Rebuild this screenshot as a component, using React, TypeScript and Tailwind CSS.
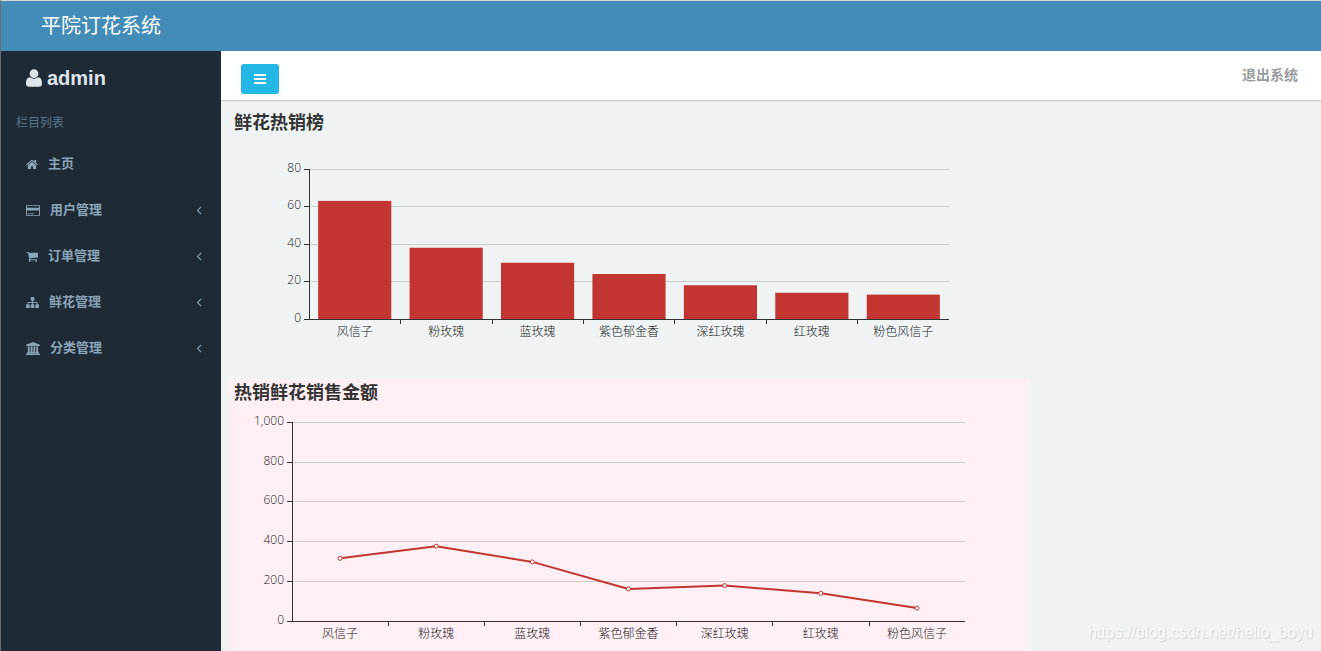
import React from 'react';

const FLOWERS = ['风信子', '粉玫瑰', '蓝玫瑰', '紫色郁金香', '深红玫瑰', '红玫瑰', '粉色风信子'];
const SALES = [63, 38, 30, 24, 18, 14, 13];
const AMOUNTS = [315, 376, 297, 161, 178, 139, 65];

const ICONS = {
  user: 'M1408 1277q0 120-73 189.500t-194 69.500h-874q-121 0-194-69.500t-73-189.500q0-53 3.500-103.500t14-109 26.500-108.500 43-97.500 62-81 85.500-53.500 111.500-20q9 0 42 21.500t74.500 48 108 48 133.500 21.500 133.500-21.500 108-48 74.500-48 42-21.500q61 0 111.500 20t85.500 53.500 62 81 43 97.500 26.500 108.500 14 109 3.500 103.500zm-320-893q0 159-112.500 271.500t-271.500 112.500-271.500-112.500-112.500-271.500 112.500-271.500 271.500-112.500 271.500 112.500 112.500 271.500z',
  bars: 'M1664 1344v128q0 26-19 45t-45 19h-1408q-26 0-45-19t-19-45v-128q0-26 19-45t45-19h1408q26 0 45 19t19 45zm0-512v128q0 26-19 45t-45 19h-1408q-26 0-45-19t-19-45v-128q0-26 19-45t45-19h1408q26 0 45 19t19 45zm0-512v128q0 26-19 45t-45 19h-1408q-26 0-45-19t-19-45v-128q0-26 19-45t45-19h1408q26 0 45 19t19 45z',
  home: 'M1472 992v480q0 26-19 45t-45 19h-384v-384h-256v384h-384q-26 0-45-19t-19-45v-480q0-1 .5-3t.5-3l575-474 575 474q1 2 1 6zm223-69l-62 74q-8 9-21 11h-3q-13 0-21-7l-692-577-692 577q-12 8-24 7-13-2-21-11l-62-74q-8-10-7-23.5t11-21.5l719-599q32-26 76-26t76 26l244 204v-195q0-14 9-23t23-9h192q14 0 23 9t9 23v408l219 182q10 8 11 21.5t-7 23.5z',
  card: 'M1760 128q66 0 113 47t47 113v1216q0 66-47 113t-113 47h-1600q-66 0-113-47t-47-113v-1216q0-66 47-113t113-47h1600zm-1600 128q-13 0-22.5 9.500t-9.500 22.500v224h1664v-224q0-13-9.500-22.500t-22.500-9.500h-1600zm1600 1280q13 0 22.500-9.500t9.500-22.500v-608h-1664v608q0 13 9.500 22.500t22.500 9.500h1600zm-1504-128v-128h256v128h-256zm384 0v-128h384v128h-384z',
  cart: 'M704 1536q0 52-38 90t-90 38-90-38-38-90 38-90 90-38 90 38 38 90zm896 0q0 52-38 90t-90 38-90-38-38-90 38-90 90-38 90 38 38 90zm128-1088v512q0 24-16.5 42.5t-40.5 21.5l-1044 122q13 60 13 70 0 16-24 64h920q26 0 45 19t19 45-19 45-45 19h-1024q-26 0-45-19t-19-45q0-11 8-31.5t16-36 21.5-40 15.5-29.5l-177-823h-204q-26 0-45-19t-19-45 19-45 45-19h256q16 0 28.5 6.5t19.5 15.5 13 24.5 8 26 5.5 29.5 4.500 26h1201q26 0 45 19t19 45z',
  sitemap: 'M1792 1248v320q0 40-28 68t-68 28h-320q-40 0-68-28t-28-68v-320q0-40 28-68t68-28h96v-192h-512v192h96q40 0 68 28t28 68v320q0 40-28 68t-68 28h-320q-40 0-68-28t-28-68v-320q0-40 28-68t68-28h96v-192h-512v192h96q40 0 68 28t28 68v320q0 40-28 68t-68 28h-320q-40 0-68-28t-28-68v-320q0-40 28-68t68-28h96v-192q0-52 38-90t90-38h512v-192h-96q-40 0-68-28t-28-68v-320q0-40 28-68t68-28h320q40 0 68 28t28 68v320q0 40-28 68t-68 28h-96v192h512q52 0 90 38t38 90v192h96q40 0 68 28t28 68z',
  bank: 'M960 0l960 384v128h-128q0 26-20.500 45t-48.500 19h-1526q-28 0-48.500-19t-20.500-45h-128v-128zm-704 640h256v768h128v-768h256v768h128v-768h256v768h128v-768h256v768h59q28 0 48.500 19t20.500 45v64h-1664v-64q0-26 20.500-45t48.500-19h59v-768zm1595 960q28 0 48.500 19t20.500 45v128h-1920v-128q0-26 20.500-45t48.500-19h1782z',
  angleLeft: 'M1203 544q0 13-10 23l-393 393 393 393q10 10 10 23t-10 23l-50 50q-10 10-23 10t-23-10l-466-466q-10-10-10-23t10-23l466-466q10-10 23-10t23 10l50 50q10 10 10 23z',
};

const MENU = [
  { label: '主页', path: ICONS.home, viewBox: '64 0 1664 1792', size: 'w-3', sub: false },
  { label: '用户管理', path: ICONS.card, viewBox: '0 0 1920 1792', size: 'w-3.5', sub: true },
  { label: '订单管理', path: ICONS.cart, viewBox: '64 0 1664 1792', size: 'w-3', sub: true },
  { label: '鲜花管理', path: ICONS.sitemap, viewBox: '0 0 1792 1792', size: 'w-[13px]', sub: true },
  { label: '分类管理', path: ICONS.bank, viewBox: '0 0 1920 1792', size: 'w-3.5', sub: true },
];

interface IconProps {
  path: string;
  viewBox?: string;
  className: string;
}

function Icon({ path, viewBox = '0 0 1792 1792', className }: IconProps) {
  return (
    <svg viewBox={viewBox} className={`shrink-0 ${className}`} fill="currentColor" aria-hidden="true">
      <path d={path} />
    </svg>
  );
}

// Put a 1px line on the pixel grid so that it stays sharp
const snap = (n: number) => Math.round(n - 0.25) + 0.5;

interface ChartProps {
  title: string;
  left: number;
  right: number;
  top: number;
  bottom: number;
  max: number;
  step: number;
  className?: string;
  children: React.ReactNode;
}

// Axes, split lines and labels shared by both charts
function Chart({ title, left, right, top, bottom, max, step, className = '', children }: ChartProps) {
  const ticks = Array.from({ length: max / step + 1 }, (_, i) => i * step);
  const band = (right - left) / FLOWERS.length;
  const yOf = (v: number) => snap(bottom - (v / max) * (bottom - top));

  return (
    <svg
      viewBox="0 0 800 270"
      role="img"
      aria-label={title}
      className={`block w-full max-w-[800px] font-['Open_Sans','Noto_Sans_CJK_SC',sans-serif] ${className}`}
    >
      <text x="5" y="20" fill="#333" fontSize="18" fontWeight="700">
        {title}
      </text>
      {ticks.map((t) => (
        <g key={t}>
          {t > 0 && <line x1={left} x2={right} y1={yOf(t)} y2={yOf(t)} stroke="#ccc" />}
          <line x1={left - 5} x2={left} y1={yOf(t)} y2={yOf(t)} stroke="#333" />
          <text x={left - 8} y={yOf(t) + 2.5} textAnchor="end" fontSize="12" fontWeight="300" fill="#222">
            {t.toLocaleString('en-US')}
          </text>
        </g>
      ))}
      {children}
      <line x1={left + 0.5} x2={left + 0.5} y1={top} y2={bottom + 1} stroke="#333" />
      <line x1={left} x2={right} y1={bottom + 0.5} y2={bottom + 0.5} stroke="#333" />
      {FLOWERS.map((name, i) => {
        const x = snap(left + band * i);
        return (
          <g key={name}>
            {i > 0 && <line x1={x} x2={x} y1={bottom} y2={bottom + 5} stroke="#333" />}
            <text
              x={left + band * (i + 0.5)}
              y={bottom + 17}
              textAnchor="middle"
              fontSize="12"
              fontWeight="300"
              fill="#222"
            >
              {name}
            </text>
          </g>
        );
      })}
    </svg>
  );
}

function BarChart() {
  const band = 640 / SALES.length;
  return (
    <Chart title="鲜花热销榜" left={80} right={720} top={60} bottom={210} max={80} step={20}>
      {SALES.map((v, i) => (
        <rect
          key={i}
          x={80 + band * (i + 0.1)}
          y={210 - (v / 80) * 150}
          width={band * 0.8}
          height={(v / 80) * 150}
          fill="#c23531"
        />
      ))}
    </Chart>
  );
}

function LineChart() {
  const band = 673 / AMOUNTS.length;
  const points = AMOUNTS.map((v, i) => ({ x: 63 + band * (i + 0.5), y: 242 - (v / 1000) * 199 }));
  return (
    <Chart
      title="热销鲜花销售金额"
      left={63}
      right={736}
      top={43}
      bottom={242}
      max={1000}
      step={200}
      className="bg-[#fff0f5]"
    >
      <polyline
        points={points.map((p) => `${p.x},${p.y}`).join(' ')}
        fill="none"
        stroke="#c23531"
        strokeWidth="2"
        strokeLinejoin="bevel"
      />
      {points.map((p) => (
        <circle key={p.x} cx={p.x} cy={p.y} r="2" fill="#fff" stroke="#c23531" />
      ))}
    </Chart>
  );
}

function Sidebar() {
  return (
    <aside className="w-[220px] shrink-0 bg-[#1e2b36] text-[#8aa4b8]">
      <div className="flex h-[54px] items-center gap-[5px] pl-[25px] text-[#dee4ec]">
        <Icon path={ICONS.user} viewBox="0 0 1408 1536" className="h-[18px] w-4" />
        <span className="text-xl font-bold">admin</span>
      </div>
      <h2 className="flex h-9 items-center pl-[15px] text-xs text-[#57748d]">栏目列表</h2>
      <nav>
        <ul>
          {MENU.map((item) => (
            <li key={item.label}>
              <a href="#" className="flex h-[46px] items-center pr-[15px] pl-[25px] text-[13px] font-bold">
                <Icon path={item.path} viewBox={item.viewBox} className={`h-[13px] ${item.size}`} />
                <span className="ml-2.5 flex-1">{item.label}</span>
                {item.sub && <Icon path={ICONS.angleLeft} className="size-3.5" />}
              </a>
            </li>
          ))}
        </ul>
      </nav>
    </aside>
  );
}

export default function App() {
  return (
    <div className="relative flex min-h-screen flex-col border-t border-l border-t-[#d4d4d4] border-l-[#6b6b6b] bg-[#eff3f4] font-['Liberation_Sans','Noto_Sans_CJK_SC',sans-serif]">
      <header className="flex h-[50px] items-center bg-[#448cb8] pl-10">
        <h1 className="text-xl text-white">平院订花系统</h1>
      </header>
      <div className="flex flex-1">
        <Sidebar />
        <main className="min-w-0 flex-1">
          <div className="flex h-[50px] items-center justify-between border-b border-[#d0d2d3] bg-white pr-[23px] pl-5 shadow-2xs">
            <button
              type="button"
              aria-label="切换菜单"
              className="mt-1.5 flex h-[30px] w-[38px] items-center justify-center rounded-[3px] bg-[#23b7e5] text-white"
            >
              <Icon path={ICONS.bars} className="size-3.5" />
            </button>
            <a href="#" className="pb-0.5 text-sm font-bold text-[#999c9e]">
              退出系统
            </a>
          </div>
          <div className="px-2 pt-2">
            <BarChart />
            <LineChart />
          </div>
        </main>
      </div>
      <div className="absolute right-2 bottom-1.5 text-base text-[#f8fafa] [text-shadow:1px_1px_1px_#cfd3d5]">
        https://blog.csdn.net/hello_boyu
      </div>
    </div>
  );
}
